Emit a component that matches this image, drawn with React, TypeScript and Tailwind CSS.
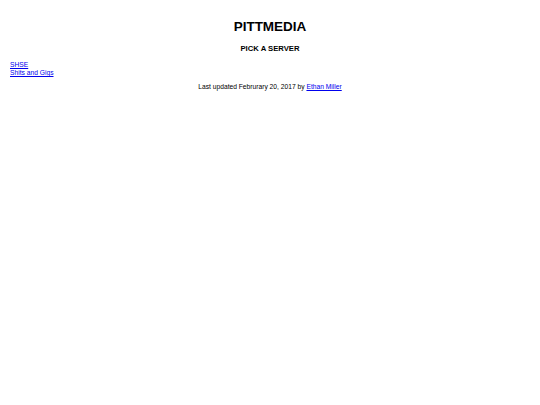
export default function App() {
  return (
    <div className="min-h-[405px] bg-white text-black" style={{ fontFamily: '"Liberation Sans", Arial, sans-serif' }}>
      <div className="px-[10px] pt-[19px]">
        <h1 className="text-center text-[13.5px] font-bold leading-[16px]">PITTMEDIA</h1>
        <h3 className="mt-[9px] text-center text-[7.7px] font-bold leading-[9px]">PICK A SERVER</h3>
        <div className="mt-[8px] flex flex-col text-[6.7px] leading-[8px]">
          <a href="#" className="self-start text-[#0000ee] underline">SHSE</a>
          <a href="#" className="self-start text-[#0000ee] underline">Shits and Gigs</a>
        </div>
        <p className="mt-[6px] text-center text-[6.7px] leading-[8px]">
          Last updated Februrary 20, 2017 by <a href="#" className="text-[#0000ee] underline">Ethan Miller</a>
        </p>
      </div>
    </div>
  );
}
